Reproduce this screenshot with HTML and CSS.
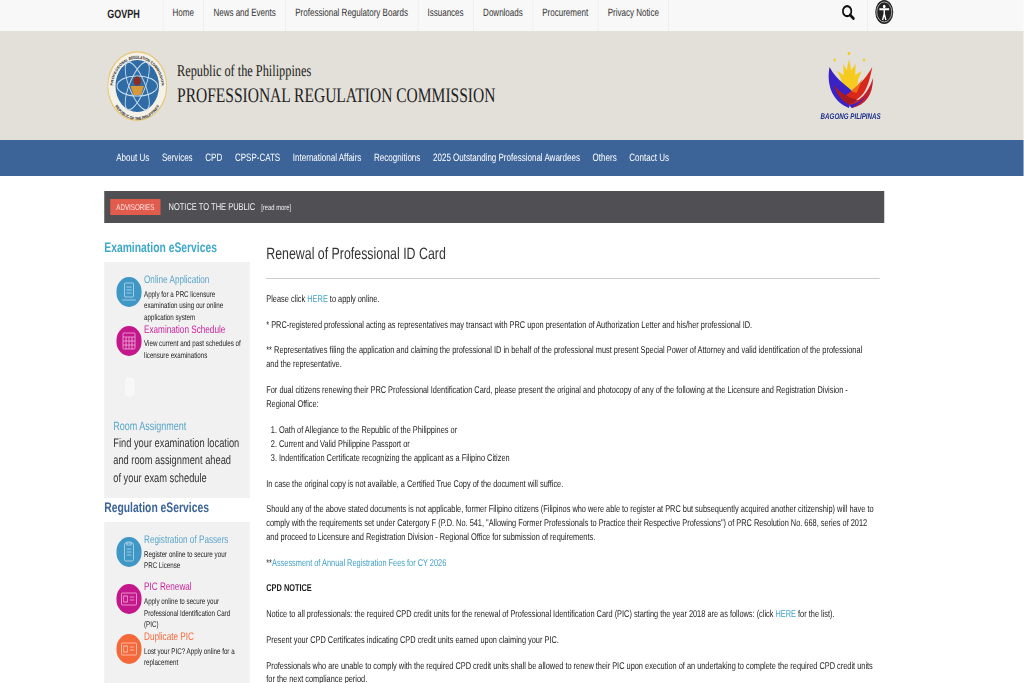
FILE: index.html
```html
<!DOCTYPE html>
<html lang="en">
  <head>
    <title>Renewal of Professional ID Card</title>
    <meta charset="UTF-8" />
    <link rel="stylesheet" href="styles.css">
  </head>
  <body>
    <div class="page">

      <div class="topbar">
        <div class="brand">GOVPH</div>
        <a class="top-link">Home</a>
        <a class="top-link">News and Events</a>
        <a class="top-link">Professional Regulatory Boards</a>
        <a class="top-link">Issuances</a>
        <a class="top-link">Downloads</a>
        <a class="top-link">Procurement</a>
        <a class="top-link">Privacy Notice</a>
        <div class="top-tools">
          <svg class="search-icon" viewBox="0 0 18 15">
            <ellipse cx="7.500" cy="6.200" rx="5.600" ry="5" fill="none" stroke="#111" stroke-width="2.300"/>
            <path d="M11.500 10 L16 13.500" stroke="#111" stroke-width="3" stroke-linecap="round"/>
          </svg>
          <div class="tool-sep"></div>
          <svg class="access-icon" viewBox="0 0 26 24">
            <circle cx="13" cy="12" r="12" fill="#222"/>
            <circle cx="13" cy="12" r="10" fill="none" stroke="#ddd" stroke-width=".8"/>
            <circle cx="13" cy="6.6" r="1.8" fill="#fff"/>
            <path d="M6.5 9.2 H19.5 M13 9.2 V14 M13 14 L10.8 20 M13 14 L15.2 20" stroke="#fff" stroke-width="1.9" fill="none"/>
          </svg>
        </div>
      </div>

      <div class="masthead">
        <div class="masthead-left">
          <svg class="seal" viewBox="0 0 80 70">
            <defs>
              <path id="sealTop" d="M9 48 A33 30 0 1 1 71 48"/>
              <path id="sealBottom" d="M4 36 A36 33 0 0 0 76 36"/>
            </defs>
            <ellipse cx="40" cy="35" rx="40" ry="35" fill="#e6c979"/>
            <ellipse cx="40" cy="35" rx="38.5" ry="33.6" fill="#f4f1e8"/>
            <ellipse cx="40" cy="35" rx="29" ry="26" fill="#2f6ba5"/>
            <g fill="none" stroke="#c6dbec" stroke-width="1.2">
              <ellipse cx="40" cy="35" rx="27" ry="10"/>
              <ellipse cx="40" cy="35" rx="27" ry="10" transform="rotate(60 40 35)"/>
              <ellipse cx="40" cy="35" rx="27" ry="10" transform="rotate(-60 40 35)"/>
            </g>
            <ellipse cx="40" cy="30" rx="5" ry="4.5" fill="#8c2f22"/>
            <path d="M31 35 H49 L45 44 H35 Z" fill="#d8983a"/>
            <text class="seal-text"><textPath href="#sealTop" startOffset="50%" text-anchor="middle">PROFESSIONAL REGULATION COMMISSION</textPath></text>
            <text class="seal-text"><textPath href="#sealBottom" startOffset="50%" text-anchor="middle">REPUBLIC OF THE PHILIPPINES</textPath></text>
          </svg>
          <div class="agency">
            <div class="agency-sub">Republic of the Philippines</div>
            <div class="agency-name">PROFESSIONAL REGULATION COMMISSION</div>
          </div>
        </div>
        <div class="bagong">
          <svg class="bagong-mark" viewBox="0 0 61 58">
            <g fill="#f6cb1f">
              <circle cx="28" cy="2.500" r="1.800"/>
              <circle cx="9" cy="9" r="1.600"/>
              <circle cx="48" cy="9" r="1.600"/>
              <path d="M28 8 L31 19 L37 13 L36 24 L45 20 L38 32 L20 32 L12 20 L21 24 L20 13 L25 19Z"/>
              <ellipse cx="29" cy="30" rx="11" ry="9"/>
            </g>
            <path d="M2 16 C-2 32 4 50 28 57 C30 50 34 46 38 44 C28 36 12 30 2 16Z" fill="#3a22c4"/>
            <path d="M59 16 C50 28 40 36 24 44 L34 50 C48 46 54 36 59 16Z" fill="#d7281a"/>
            <path d="M30 40 C38 36 42 32 46 28 L38 42Z" fill="#ef6a12"/>
            <path d="M8 34 C16 42 28 47 40 49 L30 54 C20 51 12 45 8 34Z" fill="#a81a22"/>
            <path d="M60 27 C60 44 50 54 32 57 L27 53 C42 51 54 42 60 27Z" fill="#c41f2a"/>
            <path d="M51 44 C46 50 40 54 32 57 L28 54 C38 53 46 49 51 44Z" fill="#3a22c4"/>
          </svg>
          <div class="bagong-text">BAGONG PILIPINAS</div>
        </div>
      </div>

      <div class="mainnav">
        <a>About Us</a>
        <a>Services</a>
        <a>CPD</a>
        <a>CPSP-CATS</a>
        <a>International Affairs</a>
        <a>Recognitions</a>
        <a>2025 Outstanding Professional Awardees</a>
        <a>Others</a>
        <a>Contact Us</a>
      </div>

      <div class="advisory">
        <span class="advisory-tag">ADVISORIES</span>
        <span class="advisory-text">NOTICE TO THE PUBLIC</span>
        <span class="advisory-more">[read more]</span>
      </div>

      <div class="columns">
        <div class="sidebar">
          <h3 class="side-title exam">Examination eServices</h3>
          <div class="side-panel exam-panel">
            <div class="service">
              <svg class="service-icon" viewBox="0 0 34 30">
                <ellipse cx="17" cy="15" rx="17" ry="15" fill="#3f97c6"/>
                <g fill="none" stroke="#bfdcec" stroke-width=".9">
                  <rect x="11" y="6" width="12" height="14" rx="1"/>
                  <path d="M13.500 10h7M13.500 13h7M13.500 16h7M8 23h18"/>
                </g>
              </svg>
              <div class="service-body">
                <div class="service-name blue">Online Application</div>
                <div class="service-desc">Apply for a PRC licensure examination using our online application system</div>
              </div>
            </div>
            <div class="service">
              <svg class="service-icon" viewBox="0 0 34 30">
                <ellipse cx="17" cy="15" rx="17" ry="15" fill="#c4178c"/>
                <g fill="none" stroke="#eeb4db" stroke-width=".9">
                  <rect x="9" y="7" width="16" height="16" rx="1"/>
                  <path d="M9 11h16M13 11v12M17 11v12M21 11v12M9 15h16M9 19h16"/>
                </g>
              </svg>
              <div class="service-body">
                <div class="service-name magenta">Examination Schedule</div>
                <div class="service-desc">View current and past schedules of licensure examinations</div>
              </div>
            </div>
            <svg class="room-icon" viewBox="0 0 14 20">
              <rect x="1.500" y="1" width="11" height="18" rx="4" fill="#f7f7f7" stroke="#fbfbfb"/>
            </svg>
            <div class="room">
              <div class="room-name">Room Assignment</div>
              <div class="room-desc">Find your examination location and room assignment ahead of your exam schedule</div>
            </div>
          </div>

          <h3 class="side-title reg">Regulation eServices</h3>
          <div class="side-panel">
            <div class="service gap-after">
              <svg class="service-icon" viewBox="0 0 34 30">
                <ellipse cx="17" cy="15" rx="17" ry="15" fill="#3f97c6"/>
                <g fill="none" stroke="#bfdcec" stroke-width=".9">
                  <rect x="11" y="6" width="12" height="18" rx="1.500"/>
                  <path d="M14 5h6v3h-6zM14 12h6M14 15h6M14 18h6"/>
                </g>
              </svg>
              <div class="service-body">
                <div class="service-name blue">Registration of Passers</div>
                <div class="service-desc">Register online to secure your<br>PRC License</div>
              </div>
            </div>
            <div class="service">
              <svg class="service-icon" viewBox="0 0 34 30">
                <ellipse cx="17" cy="15" rx="17" ry="15" fill="#c4178c"/>
                <g fill="none" stroke="#eeb4db" stroke-width=".9">
                  <rect x="7" y="9" width="20" height="12" rx="1"/>
                  <rect x="10" y="12" width="5" height="6"/>
                  <path d="M18 13h6M18 16h6"/>
                </g>
              </svg>
              <div class="service-body">
                <div class="service-name magenta">PIC Renewal</div>
                <div class="service-desc">Apply online to secure your Professional Identification Card (PIC)</div>
              </div>
            </div>
            <div class="service">
              <svg class="service-icon" viewBox="0 0 34 30">
                <ellipse cx="17" cy="15" rx="17" ry="15" fill="#f4683a"/>
                <g fill="none" stroke="#fbd3c3" stroke-width=".9">
                  <rect x="7" y="9" width="20" height="12" rx="1"/>
                  <rect x="10" y="12" width="5" height="6"/>
                  <path d="M18 13h6M18 16h6"/>
                </g>
              </svg>
              <div class="service-body">
                <div class="service-name orange">Duplicate PIC</div>
                <div class="service-desc">Lost your PIC? Apply online for a replacement</div>
              </div>
            </div>
          </div>
        </div>

        <div class="content">
          <h1 class="content-title">Renewal of Professional ID Card</h1>
          <hr class="content-rule">
          <p>Please click <a>HERE</a> to apply online.</p>
          <p>* PRC-registered professional acting as representatives may transact with PRC upon presentation of Authorization Letter and his/her professional ID.</p>
          <p>** Representatives filing the application and claiming the professional ID in behalf of the professional must present Special Power of Attorney and valid identification of the professional and the representative.</p>
          <p>For dual citizens renewing their PRC Professional Identification Card, please present the original and photocopy of any of the following at the Licensure and Registration Division - Regional Office:</p>
          <ol>
            <li>Oath of Allegiance to the Republic of the Philippines or</li>
            <li>Current and Valid Philippine Passport or</li>
            <li>Indentification Certificate recognizing the applicant as a Filipino Citizen</li>
          </ol>
          <p>In case the original copy is not available, a Certified True Copy of the document will suffice.</p>
          <p>Should any of the above stated documents is not applicable, former Filipino citizens (Filipinos who were able to register at PRC but subsequently acquired another citizenship) will have to comply with the requirements set under Catergory F (P.D. No. 541, "Allowing Former Professionals to Practice their Respective Professions") of PRC Resolution No. 668, series of 2012 and proceed to Licensure and Registration Division - Regional Office for submission of requirements.</p>
          <p>**<a>Assessment of Annual Registration Fees for CY 2026</a></p>
          <p><b>CPD NOTICE</b></p>
          <p>Notice to all professionals: the required CPD credit units for the renewal of Professional Identification Card (PIC) starting the year 2018 are as follows: (click <a>HERE</a> for the list).</p>
          <p>Present your CPD Certificates indicating CPD credit units earned upon claiming your PIC.</p>
          <p>Professionals who are unable to comply with the required CPD credit units shall be allowed to renew their PIC upon execution of an undertaking to complete the required CPD credit units for the next compliance period.</p>
        </div>
      </div>

    </div>
  </body>
</html>
```

FILE: styles.css
```css
html, body {
  margin: 0;
  padding: 0;
  height: 100%;
  overflow: hidden;
  background-color: white;
}

.page {
  width: 1365.33px;
  height: 683px;
  overflow: hidden;
  transform: scaleX(0.75);
  transform-origin: left top;
  filter: blur(0.3px);
  text-rendering: geometricPrecision;
  font-family: "Liberation Sans", Arial, sans-serif;
  font-size: 9.85px;
  color: #1c1c1c;
}

/* top bar */
.topbar {
  height: 31px;
  background: #f8f8f8;
  display: flex;
  align-items: stretch;
  padding-left: 143px;
  box-sizing: border-box;
}
.brand {
  width: 73.5px;
  font-weight: bold;
  font-size: 12px;
  line-height: 28px;
  color: #222;
}
.top-link {
  border-left: 1px solid #ececec;
  padding: 0 12.5px;
  font-size: 10.7px;
  line-height: 26px;
  color: #333;
}
.top-link:last-of-type {
  border-right: 1px solid #ececec;
}
.top-tools {
  margin-left: auto;
  margin-right: 173px;
  display: flex;
  align-items: flex-start;
}
.search-icon {
  width: 18px;
  height: 15px;
  margin-top: 5px;
}
.tool-sep {
  width: 1px;
  height: 31px;
  background: #ececec;
  margin: 0 9px 0 16px;
}
.access-icon {
  width: 26px;
  height: 24px;
}

/* masthead */
.masthead {
  height: 109px;
  background: #e2e0d8;
  display: flex;
  justify-content: space-between;
  align-items: center;
  padding: 0 191px 0 143px;
}
.masthead-left {
  display: flex;
  align-items: center;
  gap: 13px;
}
.seal {
  width: 80px;
  height: 70px;
}
.seal-text {
  font-size: 4.3px;
  font-weight: bold;
  fill: #222;
}
.agency {
  font-family: "Liberation Serif", "Times New Roman", serif;
  color: #222;
  margin-top: -4px;
}
.agency-sub {
  font-size: 16.4px;
  line-height: 24px;
}
.agency-name {
  font-size: 20.7px;
  line-height: 26px;
}
.bagong {
  display: flex;
  flex-direction: column;
  align-items: center;
}
.bagong-mark {
  width: 61px;
  height: 58px;
}
.bagong-text {
  font-size: 8.3px;
  font-weight: bold;
  font-style: italic;
  color: #1e2f8f;
  margin-top: 2px;
}

/* blue menu */
.mainnav {
  height: 36px;
  background: #3c6499;
  display: flex;
  align-items: center;
  gap: 16.9px;
  padding-left: 155px;
  font-size: 10.7px;
  color: #fff;
}

/* advisory strip */
.advisory {
  margin: 15px 0 0 139px;
  width: 1040px;
  height: 32px;
  background: #505054;
  display: flex;
  align-items: center;
  padding-left: 8px;
  box-sizing: border-box;
  color: #f2f2f2;
}
.advisory-tag {
  background: #e25c4e;
  color: #fbe6e2;
  font-size: 8.3px;
  padding: 0 8px;
  line-height: 16px;
  margin-right: 11px;
}
.advisory-text {
  font-size: 10px;
  margin-right: 8px;
}
.advisory-more {
  font-size: 7.8px;
}

/* two columns */
.columns {
  display: flex;
  margin-left: 139px;
  width: 1040px;
}
.sidebar {
  width: 194px;
  flex: none;
}
.side-title {
  margin: 0;
  font-size: 13.8px;
  line-height: 25px;
  font-weight: bold;
}
.side-title.exam {
  color: #3fa9c9;
  margin-top: 12px;
  margin-bottom: 2px;
}
.side-title.reg {
  color: #3c6499;
  margin-top: -3.5px;
  margin-bottom: 2.5px;
}
.side-panel {
  background: #f1f1f1;
  padding: 12px 0 24px 16px;
}
.exam-panel {
  height: 236px;
  box-sizing: border-box;
}
.service {
  display: flex;
  gap: 3px;
}
.service.gap-after {
  margin-bottom: 9.5px;
}
.service-icon {
  width: 34px;
  height: 30px;
  flex: none;
  margin-top: 2.5px;
}
.service-name {
  font-size: 10.9px;
  line-height: 12px;
  margin-bottom: 2.5px;
}
.service-name.blue { color: #58a5c9; }
.service-name.magenta { color: #c9249c; }
.service-name.orange { color: #f4683a; }
.service-desc {
  font-size: 8.3px;
  line-height: 11.7px;
  color: #222;
  padding-right: 6px;
}
.room-icon {
  display: block;
  width: 14px;
  height: 20px;
  margin: 15px 0 20px 11px;
}
.room {
  margin-left: -4px;
}
.room-name {
  font-size: 12px;
  color: #58a5c9;
  line-height: 18px;
}
.room-desc {
  font-size: 12.4px;
  line-height: 17.7px;
  color: #333;
  max-width: 170px;
}

/* article */
.content {
  margin: 0 0 0 22px;
  flex: 1;
  padding-right: 6px;
}
.content-title {
  margin: 21px 0 0;
  font-size: 16.5px;
  font-weight: normal;
  line-height: 20px;
  color: #333;
}
.content-rule {
  border: none;
  border-top: 1px solid #ccc;
  margin: 14px 0 14px;
}
.content p {
  margin: 0 0 11.95px;
  padding-right: 5px;
  line-height: 13.8px;
}
.content a {
  color: #3fa0c4;
}
.content ol {
  margin: 0 0 12px;
  padding-left: 17px;
  line-height: 14px;
}
```
